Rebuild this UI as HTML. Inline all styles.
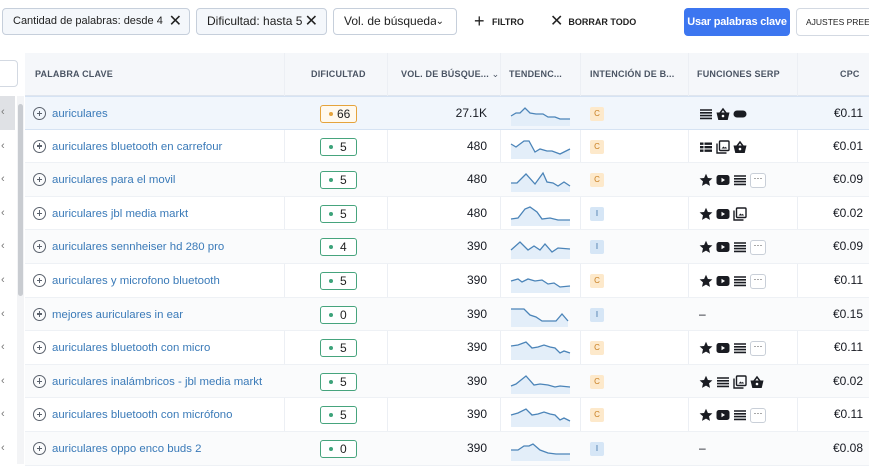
<!DOCTYPE html>
<html><head><meta charset="utf-8"><style>
*{box-sizing:border-box;margin:0;padding:0}
body{width:869px;height:464px;overflow:hidden;background:#fff;font-family:"Liberation Sans",sans-serif;color:#171a22;position:relative;white-space:nowrap}
.chip{position:absolute;top:8px;height:27px;border:1px solid #c6cfdb;border-radius:4px;background:#f4f7fb;font-size:12px;line-height:25px;padding-left:10px;color:#222;overflow:hidden}
.chip .x{position:absolute;right:8px;top:0;font-size:16px;background:inherit}
.tb{position:absolute;top:8px;font-size:9px;font-weight:bold;line-height:27px;color:#222}
.hd{position:absolute;top:53px;left:25px;width:844px;height:43px;background:#f5f7fa;border-bottom:1px solid #dfe5ee}
.h{position:absolute;top:0;line-height:43px;font-size:9px;font-weight:bold;color:#4a5463;letter-spacing:.2px}
.vl{position:absolute;top:53px;bottom:0;width:1px;background:#eceff4}
.row{position:absolute;left:25px;width:844px;height:33.6px;border-bottom:1px solid #eef1f5}
.row.g{background:#fafbfc}
.row.sel{background:#f1f6fc;border-top:1px solid #d6e3f3;border-bottom:1px solid #d6e3f3}
.kw{position:absolute;left:27px;top:1px;line-height:33px;font-size:11.4px;color:#3a7ab8}
.pl{position:absolute;left:8px;top:10px;width:13px;height:13px;border:1.3px solid #5b626d;border-radius:50%}
.pl:before{content:"";position:absolute;left:2.5px;top:4.8px;width:5.5px;height:1.3px;background:#5b626d}
.pl:after{content:"";position:absolute;left:4.6px;top:2.6px;width:1.3px;height:5.5px;background:#5b626d}
.d{position:absolute;left:295px;top:8px;width:37px;height:18px;border:1px solid #46a47d;border-radius:3px;font-size:12px;line-height:16px;padding-left:19px;color:#222;background:#fff}
.d:before{content:"";position:absolute;left:8px;top:6px;width:4px;height:4px;border-radius:50%;background:#3da37a}
.d.o{border-color:#e5a33b;padding-left:16px;background:#fff9ee}
.d.o:before{background:#e5a33b}
.v{position:absolute;right:382px;top:0;line-height:33px;font-size:12px}
.sp{position:absolute;left:485px;top:7px}
.i{position:absolute;left:565px;top:10px;width:14px;height:14px;border-radius:2px;font-size:8px;line-height:14px;text-align:center}
.i.c{background:#fde9cb;color:#c77d1f}.i.n{background:#d6e6f6;color:#3a6ea5}
.f{position:absolute;left:674px;top:10px;height:14px;display:flex;gap:3px;align-items:center}
.f svg{width:14px;height:14px}
.more{width:16px;height:15px;border:1px solid #c9cfd8;border-radius:3px;font-size:9px;line-height:9px;text-align:center;color:#333;background:#fff}
.cpc{position:absolute;right:6px;top:0;line-height:33px;font-size:12px}
.dash{position:absolute;left:674px;top:0;line-height:33px;font-size:12px}
.lc{position:absolute;left:0;width:15px;height:33.6px;font-size:11px;color:#777;line-height:33px;text-align:left;padding-left:1px}
</style></head><body>
<svg width="0" height="0" style="position:absolute">
<defs>
<symbol id="star" viewBox="0 0 14 14"><path d="M7 .8l1.9 4.2 4.5.4-3.4 3 1 4.5L7 10.6 3 12.9l1-4.5-3.4-3 4.5-.4z" fill="#1a1c22"/></symbol>
<symbol id="yt" viewBox="0 0 14 14"><rect x="0.5" y="2" width="13" height="10" rx="2.5" fill="#1a1c22"/><path d="M5.5 4.8v4.4L9 7z" fill="#fff"/></symbol>
<symbol id="list" viewBox="0 0 14 14"><path d="M1 3h12M1 5.8h12M1 8.6h12M1 11.4h12" stroke="#1a1c22" stroke-width="1.6"/></symbol>
<symbol id="tab" viewBox="0 0 14 14"><path d="M1 2.5h12v2.4H1zM1 6h12v2.4H1zM1 9.5h12v2.4H1z" fill="#1a1c22"/><path d="M5 2v10" stroke="#fff" stroke-width="1"/></symbol>
<symbol id="img" viewBox="0 0 14 14"><path d="M1 3.5v9.5h9.5" stroke="#1a1c22" stroke-width="1.4" fill="none"/><rect x="3.5" y="1" width="9.5" height="9.5" rx="1" stroke="#1a1c22" stroke-width="1.4" fill="none"/><path d="M5.5 8.5l2-2 1.3 1.3 1-1L11 8.5z" fill="#1a1c22"/></symbol>
<symbol id="bask" viewBox="0 0 14 14"><path d="M4 6l3-4 3 4" stroke="#1a1c22" stroke-width="1.5" fill="none"/><path d="M0.5 5.5h13l-1.8 7.5H2.3z" fill="#1a1c22"/><circle cx="7" cy="9" r="1.3" fill="#fff"/></symbol>
<symbol id="pill" viewBox="0 0 14 14"><rect x="0.5" y="3.5" width="13" height="7" rx="3.5" fill="#1a1c22"/></symbol>
</defs></svg>

<div class="chip" style="left:2px;width:188px;font-size:11px">Cantidad de palabras: desde 4<span class="x" style="right:7px">✕</span></div>
<div class="chip" style="left:196px;width:131px">Dificultad: hasta 5<span class="x">✕</span></div>
<div class="chip" style="left:333px;width:124px;background:#fff">Vol. de búsqueda<span class="x" style="font-size:10px;right:12px">⌄</span></div>
<div class="tb" style="left:474px"><span style="font-size:18px;font-weight:normal;vertical-align:-2px">+</span>&nbsp;&nbsp; FILTRO</div>
<div class="tb" style="left:550px"><span style="font-size:16px;font-weight:normal;vertical-align:-1px">✕</span>&nbsp;&nbsp;BORRAR TODO</div>
<div style="position:absolute;left:684px;top:8px;width:106px;height:28px;background:#3c76f0;border-radius:4px;color:#fff;font-size:11px;font-weight:bold;line-height:28px;text-align:center;letter-spacing:-.2px">Usar palabras clave</div>
<div style="position:absolute;left:796px;top:8px;width:90px;height:28px;border:1px solid #d3d9e2;border-radius:4px;font-size:8.5px;line-height:26px;padding-left:9px;color:#222;overflow:hidden">AJUSTES PREESTABLECIDOS</div>

<div style="position:absolute;left:-4px;top:60px;width:22px;height:27px;border:1px solid #d3d9e2;border-radius:4px;background:#fff"></div>
<div style="position:absolute;left:0;top:96px;width:15px;height:34px;background:#dfe1e5"></div>
<div style="position:absolute;left:17px;top:96px;width:7px;height:368px;background:#f3f4f6"></div>
<div style="position:absolute;left:18px;top:104px;width:5px;height:192px;background:#c9ccd1;border-radius:3px"></div>

<div class="hd">
<div class="h" style="left:10px">PALABRA CLAVE</div>
<div class="h" style="left:286px">DIFICULTAD</div>
<div class="h" style="left:376px">VOL. DE BÚSQUE... <span style="font-weight:normal">⌄</span></div>
<div class="h" style="left:484px">TENDENC...</div>
<div class="h" style="left:565px">INTENCIÓN DE B...</div>
<div class="h" style="left:672px">FUNCIONES SERP</div>
<div class="h" style="left:815px">CPC</div>
</div>
<div class="vl" style="left:284px"></div><div class="vl" style="left:387px"></div><div class="vl" style="left:500px"></div><div class="vl" style="left:580px"></div><div class="vl" style="left:688px"></div><div class="vl" style="left:797px"></div>

<div class="lc" style="top:96px">‹</div><div class="lc" style="top:129.6px">‹</div><div class="lc" style="top:163.2px">‹</div><div class="lc" style="top:196.8px">‹</div><div class="lc" style="top:230.4px">‹</div><div class="lc" style="top:264px">‹</div><div class="lc" style="top:297.6px">‹</div><div class="lc" style="top:331.2px">‹</div><div class="lc" style="top:364.8px">‹</div><div class="lc" style="top:398.4px">‹</div><div class="lc" style="top:432px">‹</div>

<div class="row sel" style="top:96px"><span class="pl"></span><span class="kw">auriculares</span><span class="d o">66</span><span class="v">27.1K</span>
<svg class="sp" width="62" height="22"><path d="M1 12L6 9 10 9 15 4 20 9 26 10 33 10 38 13 45 13 50 15 60 15V22H1z" fill="#e3eef9"/><path d="M1 12L6 9 10 9 15 4 20 9 26 10 33 10 38 13 45 13 50 15 60 15" stroke="#4b84b8" stroke-width="1.3" fill="none"/></svg>
<span class="i c">C</span><span class="f"><svg><use href="#list"/></svg><svg><use href="#bask"/></svg><svg><use href="#pill"/></svg></span><span class="cpc">€0.11</span></div>

<div class="row" style="top:129.6px"><span class="pl"></span><span class="kw">auriculares bluetooth en carrefour</span><span class="d">5</span><span class="v">480</span>
<svg class="sp" width="62" height="22"><path d="M1 7L6 10 14 4 19 4 25 15 30 12 37 14 42 14 50 17 60 12V22H1z" fill="#e3eef9"/><path d="M1 7L6 10 14 4 19 4 25 15 30 12 37 14 42 14 50 17 60 12" stroke="#4b84b8" stroke-width="1.3" fill="none"/></svg>
<span class="i c">C</span><span class="f"><svg><use href="#tab"/></svg><svg><use href="#img"/></svg><svg><use href="#bask"/></svg></span><span class="cpc">€0.01</span></div>

<div class="row g" style="top:163.2px"><span class="pl"></span><span class="kw">auriculares para el movil</span><span class="d">5</span><span class="v">480</span>
<svg class="sp" width="62" height="22"><path d="M1 13L7 13 16 4 25 14 33 3 37 12 43 13 48 16 54 12 60 16V22H1z" fill="#e3eef9"/><path d="M1 13L7 13 16 4 25 14 33 3 37 12 43 13 48 16 54 12 60 16" stroke="#4b84b8" stroke-width="1.3" fill="none"/></svg>
<span class="i c">C</span><span class="f"><svg><use href="#star"/></svg><svg><use href="#yt"/></svg><svg><use href="#list"/></svg><span class="more">···</span></span><span class="cpc">€0.09</span></div>

<div class="row" style="top:196.8px"><span class="pl"></span><span class="kw">auriculares jbl media markt</span><span class="d">5</span><span class="v">480</span>
<svg class="sp" width="62" height="22"><path d="M1 15L8 14 15 5 20 3 27 8 32 15 40 14 48 16 60 16V22H1z" fill="#e3eef9"/><path d="M1 15L8 14 15 5 20 3 27 8 32 15 40 14 48 16 60 16" stroke="#4b84b8" stroke-width="1.3" fill="none"/></svg>
<span class="i n">I</span><span class="f"><svg><use href="#star"/></svg><svg><use href="#yt"/></svg><svg><use href="#img"/></svg></span><span class="cpc">€0.02</span></div>

<div class="row g" style="top:230.4px"><span class="pl"></span><span class="kw">auriculares sennheiser hd 280 pro</span><span class="d">4</span><span class="v">390</span>
<svg class="sp" width="62" height="22"><path d="M1 13L10 5 18 13 24 9 30 13 35 7 42 15 48 11 60 12V22H1z" fill="#e3eef9"/><path d="M1 13L10 5 18 13 24 9 30 13 35 7 42 15 48 11 60 12" stroke="#4b84b8" stroke-width="1.3" fill="none"/></svg>
<span class="i n">I</span><span class="f"><svg><use href="#star"/></svg><svg><use href="#yt"/></svg><svg><use href="#list"/></svg><span class="more">···</span></span><span class="cpc">€0.09</span></div>

<div class="row" style="top:264px"><span class="pl"></span><span class="kw">auriculares y microfono bluetooth</span><span class="d">5</span><span class="v">390</span>
<svg class="sp" width="62" height="22"><path d="M1 10L8 8 12 11 18 8 25 10 32 9 38 13 44 12 50 16 60 15V22H1z" fill="#e3eef9"/><path d="M1 10L8 8 12 11 18 8 25 10 32 9 38 13 44 12 50 16 60 15" stroke="#4b84b8" stroke-width="1.3" fill="none"/></svg>
<span class="i c">C</span><span class="f"><svg><use href="#star"/></svg><svg><use href="#yt"/></svg><svg><use href="#list"/></svg><span class="more">···</span></span><span class="cpc">€0.11</span></div>

<div class="row g" style="top:297.6px"><span class="pl"></span><span class="kw">mejores auriculares in ear</span><span class="d">0</span><span class="v">390</span>
<svg class="sp" width="62" height="22"><path d="M1 4L14 4 20 10 26 12 32 16 40 16 46 16 52 9 58 16V22H1z" fill="#e3eef9"/><path d="M1 4L14 4 20 10 26 12 32 16 40 16 46 16 52 9 58 16" stroke="#4b84b8" stroke-width="1.3" fill="none"/></svg>
<span class="i n">I</span><span class="dash">–</span><span class="cpc">€0.15</span></div>

<div class="row" style="top:331.2px"><span class="pl"></span><span class="kw">auriculares bluetooth con micro</span><span class="d">5</span><span class="v">390</span>
<svg class="sp" width="62" height="22"><path d="M1 8L8 7 16 4 22 10 28 9 34 7 40 9 45 10 50 15 54 13 60 15V22H1z" fill="#e3eef9"/><path d="M1 8L8 7 16 4 22 10 28 9 34 7 40 9 45 10 50 15 54 13 60 15" stroke="#4b84b8" stroke-width="1.3" fill="none"/></svg>
<span class="i c">C</span><span class="f"><svg><use href="#star"/></svg><svg><use href="#yt"/></svg><svg><use href="#list"/></svg><span class="more">···</span></span><span class="cpc">€0.11</span></div>

<div class="row g" style="top:364.8px"><span class="pl"></span><span class="kw">auriculares inalámbricos - jbl media markt</span><span class="d">5</span><span class="v">390</span>
<svg class="sp" width="62" height="22"><path d="M1 14L6 12 16 4 24 13 30 12 38 13 45 15 50 14 60 15V22H1z" fill="#e3eef9"/><path d="M1 14L6 12 16 4 24 13 30 12 38 13 45 15 50 14 60 15" stroke="#4b84b8" stroke-width="1.3" fill="none"/></svg>
<span class="i c">C</span><span class="f"><svg><use href="#star"/></svg><svg><use href="#list"/></svg><svg><use href="#img"/></svg><svg><use href="#bask"/></svg></span><span class="cpc">€0.02</span></div>

<div class="row" style="top:398.4px"><span class="pl"></span><span class="kw">auriculares bluetooth con micrófono</span><span class="d">5</span><span class="v">390</span>
<svg class="sp" width="62" height="22"><path d="M1 10L8 8 16 4 22 10 28 9 34 7 40 9 45 10 50 15 54 13 60 16V22H1z" fill="#e3eef9"/><path d="M1 10L8 8 16 4 22 10 28 9 34 7 40 9 45 10 50 15 54 13 60 16" stroke="#4b84b8" stroke-width="1.3" fill="none"/></svg>
<span class="i c">C</span><span class="f"><svg><use href="#star"/></svg><svg><use href="#yt"/></svg><svg><use href="#list"/></svg><span class="more">···</span></span><span class="cpc">€0.11</span></div>

<div class="row g" style="top:432px"><span class="pl"></span><span class="kw">auriculares oppo enco buds 2</span><span class="d">0</span><span class="v">390</span>
<svg class="sp" width="62" height="22"><path d="M1 11L8 11 14 7 19 7 23 5 30 11 38 14 46 15 60 15V22H1z" fill="#e3eef9"/><path d="M1 11L8 11 14 7 19 7 23 5 30 11 38 14 46 15 60 15" stroke="#4b84b8" stroke-width="1.3" fill="none"/></svg>
<span class="i n">I</span><span class="dash">–</span><span class="cpc">€0.08</span></div>
</body></html>
